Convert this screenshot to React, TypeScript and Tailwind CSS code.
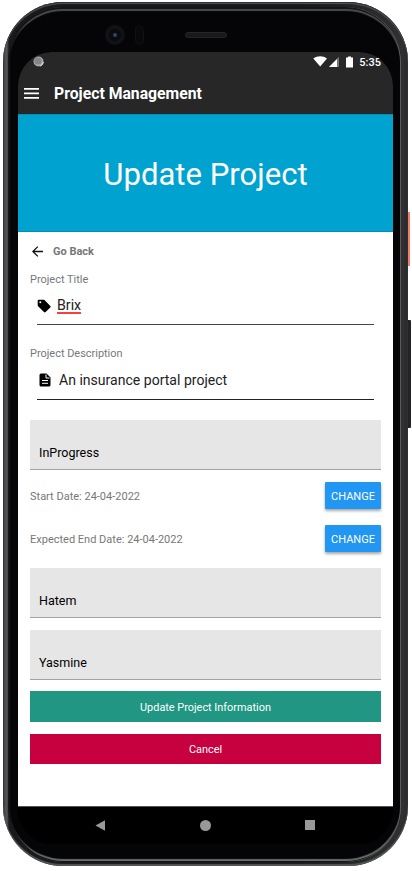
import React from "react";

function StatusBar() {
  return (
    <div className="flex h-[20px] items-center justify-between pl-[15px] pr-[12px]">
      <svg className="-mt-[1px]" width="11" height="11" viewBox="0 0 11 11">
        <circle cx="5.5" cy="5.5" r="5" fill="#a9a9a9" />
        <circle cx="5" cy="5" r="3.6" fill="#858585" />
        <path d="M7 10.2A5 5 0 0 0 10.4 6" stroke="#e5e5e5" fill="none" />
      </svg>
      <div className="flex items-center">
        <svg width="44" height="12" viewBox="0 0 44 12" fill="#fff">
          <path d="M0.3 2.4C4.5-0.4 9.8-0.4 14 2.4L7.200 10.600Z" />
          <path d="M16 11L26 0.800V11Z" fill="#777" />
          <path d="M16 11L24 3V11Z" />
          <path d="M33 1.600H35V0.500H38V1.600H40V11.500H33Z" />
        </svg>
        <span className="ml-[2px] pt-[1px] text-[11px] font-medium leading-[12px]">5:35</span>
      </div>
    </div>
  );
}

function AppBar() {
  return (
    <div className="flex h-[42px] items-center pl-[6px]">
      <svg width="15" height="11" viewBox="0 0 15 11" fill="#fff">
        <path d="M0 0H15V1.700H0ZM0 4.500H15V6.200H0ZM0 9H15V10.700H0Z" />
      </svg>
      <h1 className="ml-[15px] pt-[2px] text-[15.750px] font-bold leading-[20px]">Project Management</h1>
    </div>
  );
}

function Label({ children }: { children: React.ReactNode }) {
  return <div className="h-[16px] text-[10.950px] leading-[18px] text-[#777]">{children}</div>;
}

function SelectBox({ value }: { value: string }) {
  return (
    <div className="flex h-[50px] items-end border-b border-[#a3a3a3] bg-[#e6e6e6] pb-[7px] pl-[9px] text-[12.500px] leading-[18px] text-black">
      {value}
    </div>
  );
}

function DateRow({ text }: { text: string }) {
  return (
    <div className="flex h-[27px] items-center justify-between">
      <span className="pt-[2px] text-[11px] leading-[16px] text-[#777]">{text}</span>
      <button className="h-[27px] w-[56px] rounded-[1px] bg-[#2196f3] pt-[3px] text-[11px] text-white shadow-[0_2px_3px_rgba(0,0,0,0.35)]">
        CHANGE
      </button>
    </div>
  );
}

function Form() {
  return (
    <main className="flex h-[574px] flex-col bg-white px-[12px] pt-[11px]">
      <div className="flex h-[18px] items-center pl-[2px] text-[#777]">
        <svg className="-mt-[2px]" width="11" height="11" viewBox="0 0 11 11" fill="none" stroke="#111" strokeWidth="1.300">
          <path d="M11 5.500H1M5.800 0.600L0.900 5.500L5.800 10.400" />
        </svg>
        <span className="ml-[10px] text-[11px] font-bold">Go Back</span>
      </div>
      <div className="mt-[10px]">
        <Label>Project Title</Label>
        <div className="mx-[7px] flex h-[38px] items-center border-b border-[#444]">
          <svg width="14" height="14" viewBox="0 0 14 14" fill="#000">
            <path fillRule="evenodd" d="M1.800 0.700H6.500Q7 0.700 7.500 1.100L13.300 6.900Q14 7.600 13.300 8.400L8.600 13Q7.800 13.800 7 13L1.100 7.200Q0.700 6.800 0.700 6.200V1.800Q0.700 0.700 1.800 0.700ZM3.300 2.300A1 1 0 1 0 3.300 4.300A1 1 0 0 0 3.300 2.300Z" />
          </svg>
          <span className="ml-[6px] h-[17px] border-b-2 border-[#f4433c] text-[14.200px] leading-[17px] text-[#222]">Brix</span>
        </div>
      </div>
      <div className="mt-[20px]">
        <Label>Project Description</Label>
        <div className="mx-[7px] flex h-[39px] items-center border-b border-[#222] pb-[1px] pl-[2px]">
          <svg width="12" height="14" viewBox="0 0 12 14">
            <path d="M2 0.500H7.500L11.500 4.500V12Q11.500 13.500 10 13.500H2Q0.500 13.500 0.500 12V2Q0.500 0.500 2 0.500Z" fill="#000" />
            <path d="M7 1.500V5H10.500M3 7.500H9M3 10.300H9" stroke="#fff" fill="none" />
          </svg>
          <span className="ml-[8px] text-[14.050px] leading-[18px] text-[#222]">An insurance portal project</span>
        </div>
      </div>
      <div className="mt-[20px]"><SelectBox value="InProgress" /></div>
      <div className="mt-[12px]"><DateRow text="Start Date: 24-04-2022" /></div>
      <div className="mt-[16px]"><DateRow text="Expected End Date: 24-04-2022" /></div>
      <div className="mt-[16px] flex flex-col gap-[12px]">
        <SelectBox value="Hatem" />
        <SelectBox value="Yasmine" />
      </div>
      <button className="mt-[11px] h-[31px] shrink-0 bg-[#209683] pt-[3px] text-[10.900px] text-white">Update Project Information</button>
      <button className="mt-[12px] h-[30px] shrink-0 bg-[#c70040] pt-[3px] text-[10.900px] text-white">Cancel</button>
    </main>
  );
}

function NavBar() {
  return (
    <nav className="flex h-[38px] items-center justify-between border-t border-[#555] bg-black pl-[77px] pr-[78px]">
      <svg width="10" height="11" viewBox="0 0 10 11"><path d="M0.500 5.500L10 0.300V10.700Z" fill="#999" /></svg>
      <div className="size-[11px] rounded-full bg-[#999]" />
      <div className="mb-[1px] size-[10px] bg-[#999]" />
    </nav>
  );
}

export default function App() {
  return (
    <div className="relative h-[871px] w-[412px] overflow-hidden bg-white font-['Roboto',sans-serif] text-white">
      <div className="absolute left-[406px] top-[212px] h-[54px] w-[4px] bg-[#ef7f69]" />
      <div className="absolute left-[406px] top-[320px] h-[108px] w-[5px] rounded-r-[1px] bg-[#222324]" />
      <div className="relative ml-[3px] pt-[2px]">
        <div className="h-[864px] w-[405px] rounded-[60px] bg-[linear-gradient(90deg,#2b2c2d_0px,#4b4c4e_2px,#55565a_4px,#19191b_6px,#19191b_300px,#303032_400px,#29292b_405px)] p-[1px] shadow-[inset_0_1px_0_#303134,inset_0_2px_1px_#55565a,inset_0_-2px_1px_#555656]">
          <div className="ml-[4px] mr-[6px] mt-[4px] h-[855px] rounded-[55px] bg-[#050507] pl-[10px] shadow-[inset_2px_0_1px_#141416,inset_-1px_0_0_#5c5c5e,inset_0_2px_0_#16171a,inset_0_4px_1px_#4b4c4c,inset_0_-1px_0_#131414,inset_0_-3px_1px_#696e69]">
            <div className="flex h-[45px] items-center pt-[10px]">
              <div className="ml-[87px] flex size-[20px] items-center justify-center rounded-full bg-[#111214]">
                <div className="flex size-[12px] items-center justify-center rounded-full bg-[#080a10]">
                  <div className="size-[4px] rounded-full bg-[#39445f]" />
                </div>
              </div>
              <div className="ml-[10px] h-[20px] w-[9px] rounded-full border border-[#101113] bg-[#09090b]" />
              <div className="ml-[41px] h-[6px] w-[42px] rounded-full border border-[#252525] bg-[#191919]" />
            </div>
            <div className="w-[375px] overflow-hidden rounded-[34px] bg-black">
              <header className="h-[62px] bg-[#272727]">
                <StatusBar />
                <AppBar />
              </header>
              <div className="flex h-[118px] items-center justify-center border-y border-[#078db4] bg-[#00a3cf] pt-[4px] text-[31.100px]">
                Update Project
              </div>
              <Form />
              <NavBar />
            </div>
          </div>
        </div>
      </div>
    </div>
  );
}
